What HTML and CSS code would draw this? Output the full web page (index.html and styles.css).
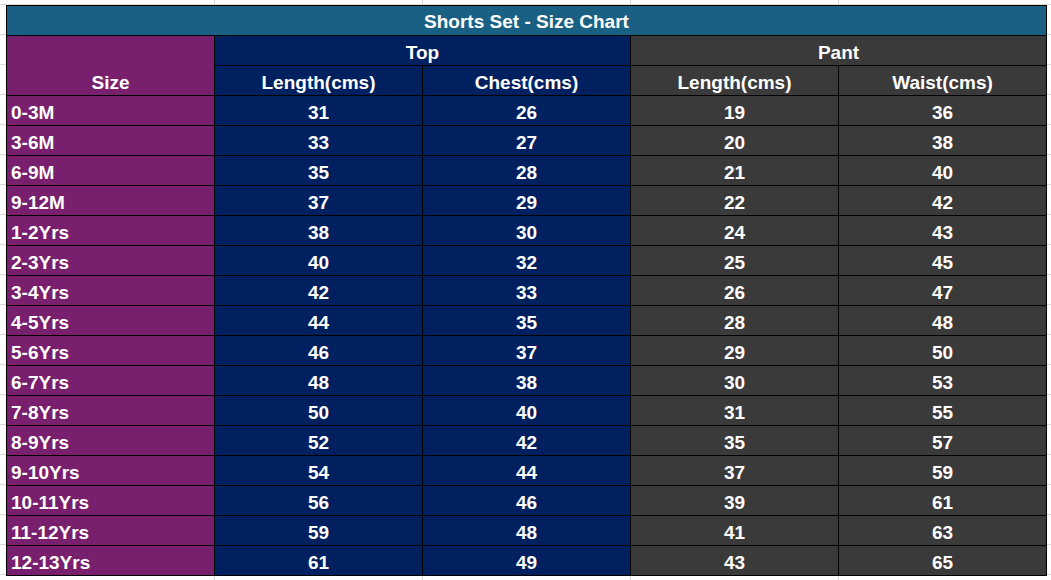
FILE: index.html
```html
<!DOCTYPE html>
<html>
<head>
<meta charset="utf-8">
<link rel="stylesheet" href="styles.css">
</head>
<body>
<table class="chart">
  <colgroup>
    <col class="c"><col class="c"><col class="c"><col class="c"><col class="c">
  </colgroup>
  <tr><th class="title" colspan="5">Shorts Set - Size Chart</th></tr>
  <tr>
    <th class="size" rowspan="2">Size</th>
    <th class="top" colspan="2">Top</th>
    <th class="pant" colspan="2">Pant</th>
  </tr>
  <tr>
    <th class="top">Length(cms)</th>
    <th class="top">Chest(cms)</th>
    <th class="pant">Length(cms)</th>
    <th class="pant">Waist(cms)</th>
  </tr>
  <tr><td class="size">0-3M</td><td class="top">31</td><td class="top">26</td><td class="pant">19</td><td class="pant">36</td></tr>
  <tr><td class="size">3-6M</td><td class="top">33</td><td class="top">27</td><td class="pant">20</td><td class="pant">38</td></tr>
  <tr><td class="size">6-9M</td><td class="top">35</td><td class="top">28</td><td class="pant">21</td><td class="pant">40</td></tr>
  <tr><td class="size">9-12M</td><td class="top">37</td><td class="top">29</td><td class="pant">22</td><td class="pant">42</td></tr>
  <tr><td class="size">1-2Yrs</td><td class="top">38</td><td class="top">30</td><td class="pant">24</td><td class="pant">43</td></tr>
  <tr><td class="size">2-3Yrs</td><td class="top">40</td><td class="top">32</td><td class="pant">25</td><td class="pant">45</td></tr>
  <tr><td class="size">3-4Yrs</td><td class="top">42</td><td class="top">33</td><td class="pant">26</td><td class="pant">47</td></tr>
  <tr><td class="size">4-5Yrs</td><td class="top">44</td><td class="top">35</td><td class="pant">28</td><td class="pant">48</td></tr>
  <tr><td class="size">5-6Yrs</td><td class="top">46</td><td class="top">37</td><td class="pant">29</td><td class="pant">50</td></tr>
  <tr><td class="size">6-7Yrs</td><td class="top">48</td><td class="top">38</td><td class="pant">30</td><td class="pant">53</td></tr>
  <tr><td class="size">7-8Yrs</td><td class="top">50</td><td class="top">40</td><td class="pant">31</td><td class="pant">55</td></tr>
  <tr><td class="size">8-9Yrs</td><td class="top">52</td><td class="top">42</td><td class="pant">35</td><td class="pant">57</td></tr>
  <tr><td class="size">9-10Yrs</td><td class="top">54</td><td class="top">44</td><td class="pant">37</td><td class="pant">59</td></tr>
  <tr><td class="size">10-11Yrs</td><td class="top">56</td><td class="top">46</td><td class="pant">39</td><td class="pant">61</td></tr>
  <tr><td class="size">11-12Yrs</td><td class="top">59</td><td class="top">48</td><td class="pant">41</td><td class="pant">63</td></tr>
  <tr><td class="size">12-13Yrs</td><td class="top">61</td><td class="top">49</td><td class="pant">43</td><td class="pant">65</td></tr>
</table>
</body>
</html>
```
FILE: styles.css
```css
html, body {
  margin: 0;
  padding: 0;
}
body {
  width: 1051px;
  height: 580px;
  overflow: hidden;
  background-color: #ffffff;
  background-image:
    repeating-linear-gradient(to bottom, transparent 0, transparent 4px, #dadada 4px, #dadada 5px, transparent 5px, transparent 30px),
    linear-gradient(to right, transparent 214px, #dadada 214px, #dadada 215px, transparent 215px, transparent 422px, #dadada 422px, #dadada 423px, transparent 423px, transparent 630px, #dadada 630px, #dadada 631px, transparent 631px, transparent 838px, #dadada 838px, #dadada 839px, transparent 839px);
  font-family: "Liberation Sans", Arial, sans-serif;
}
.chart {
  margin: 5px 0 0 6px;
  border-collapse: collapse;
  table-layout: fixed;
  width: 1041px;
  color: #ffffff;
  font-size: 19px;
  font-weight: bold;
}
.c {
  width: 208px;
}
.chart tr {
  height: 30px;
}
.chart th,
.chart td {
  border: 1px solid #000000;
  padding: 0 4px 2px;
  line-height: 20px;
  vertical-align: bottom;
  text-align: center;
  white-space: nowrap;
  font-weight: bold;
}
.title {
  background: #1a6082;
}
.chart th.title {
  padding-bottom: 3px;
}
.size {
  background: #78206e;
}
td.size {
  text-align: left;
}
.top {
  background: #002060;
}
.pant {
  background: #3a3a3a;
}
```
